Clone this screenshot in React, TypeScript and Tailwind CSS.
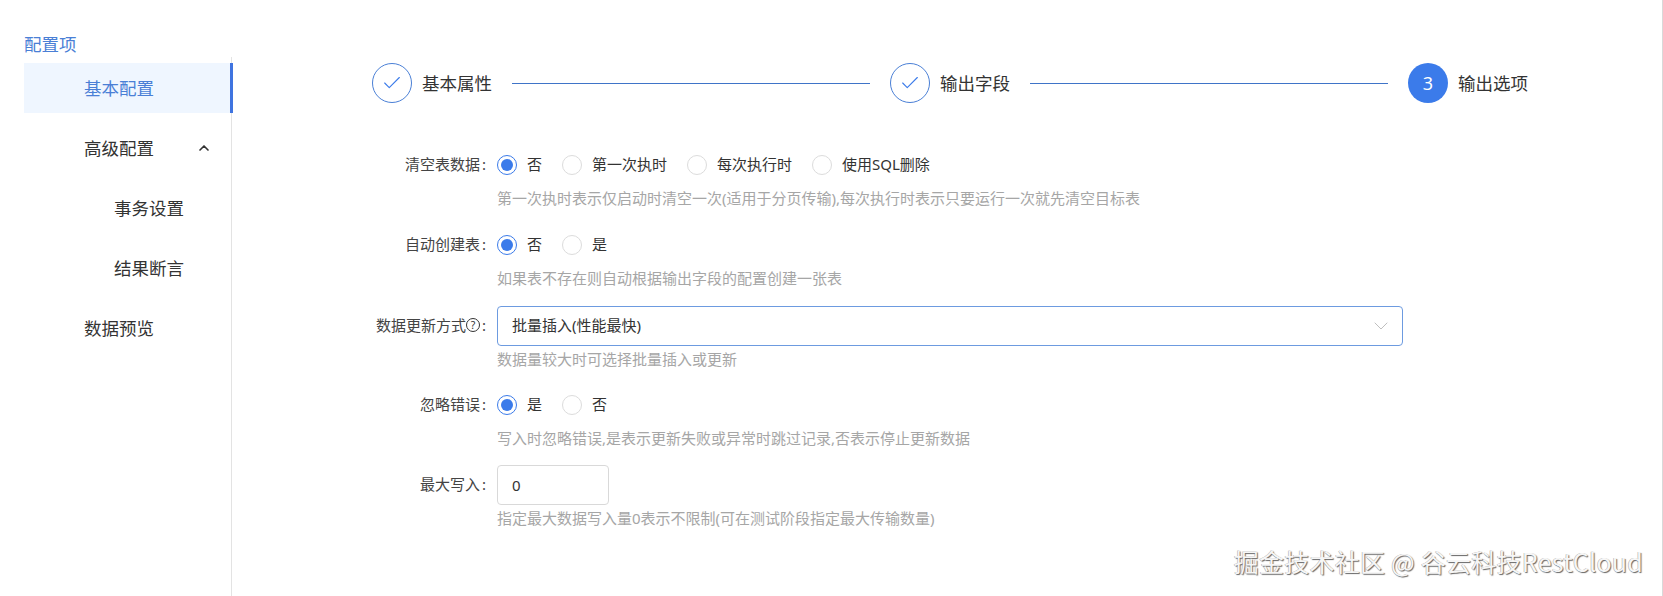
import { Check, ChevronDown, ChevronUp } from 'lucide-react';
import type { ReactNode } from 'react';

const FONT = "font-['Noto_Sans','Noto_Sans_CJK_SC',sans-serif]";

function Step({ label, num }: { label: string; num?: number }) {
  return (
    <div className="flex items-center gap-[10px] shrink-0">
      {num ? (
        <div className="w-10 h-10 rounded-full bg-[#3b7bea] text-white text-[18px] flex items-center justify-center">
          {num}
        </div>
      ) : (
        <div className="w-10 h-10 rounded-full border border-[#4a7fd6] text-[#3b7bea] flex items-center justify-center">
          <Check className="w-[22px] h-[22px]" strokeWidth={1.2} />
        </div>
      )}
      <span className="text-[17.5px] text-[#333]">{label}</span>
    </div>
  );
}

function Radio({ label, checked }: { label: string; checked?: boolean }) {
  return (
    <div className="flex items-center gap-[10px] mr-[20px]">
      {checked ? (
        <span className="w-5 h-5 rounded-full border border-[#3b7bea] flex items-center justify-center">
          <span className="w-3 h-3 rounded-full bg-[#3b7bea]" />
        </span>
      ) : (
        <span className="w-5 h-5 rounded-full border border-[#dcdcdc]" />
      )}
      <span className="text-[15px] text-[#333] pb-[2px]">{label}</span>
    </div>
  );
}

function Row({ label, help, children }: { label: ReactNode; help: string; children: ReactNode }) {
  return (
    <div className="flex h-20">
      <div className="w-[139px] h-10 pb-[2px] flex items-center justify-end gap-[2px] pr-[11px] text-[15px] text-[#444]">
        {label}
        <span>:</span>
      </div>
      <div className="flex-1">
        <div className="h-10 flex items-center">{children}</div>
        <div className="mt-[1px] text-[15px] leading-6 text-[#a6a6a6] whitespace-nowrap">{help}</div>
      </div>
    </div>
  );
}

export default function App() {
  return (
    <div className={`${FONT} relative w-[1663px] h-[596px] bg-white overflow-hidden flex border-r border-[#d9d9d9]`}>
      {/* Sidebar */}
      <aside className="w-[233px] shrink-0 pl-6 pt-[32px] flex flex-col">
        <div className="text-[17.5px] leading-[25px] text-[#4a7fd6]">配置项</div>
        <div className="flex-1 border-r border-[#e3e3e3] mr-[1px] text-[17.5px] text-[#333]">
          <div className="h-[6px]" />
          <div className="h-[50px] -mr-[2px] pl-[60px] flex items-center bg-[#eff6ff] border-r-[3px] border-[#3f74e0] text-[#4a7fd6]">
            基本配置
          </div>
          <div className="h-[50px] mt-[10px] pl-[60px] pr-[19px] flex items-center justify-between">
            高级配置
            <ChevronUp className="w-4 h-4 text-[#333]" strokeWidth={2.5} />
          </div>
          <div className="h-[50px] mt-[10px] pl-[90px] flex items-center">事务设置</div>
          <div className="h-[50px] mt-[10px] pl-[90px] flex items-center">结果断言</div>
          <div className="h-[50px] mt-[10px] pl-[60px] flex items-center">数据预览</div>
        </div>
      </aside>

      {/* Main */}
      <main className="flex-1 pt-[63px]">
        <div className="w-[1156px] ml-[139px] flex items-center">
          <Step label="基本属性" />
          <div className="w-[358px] h-px bg-[#3f74c8] ml-5 mr-5" />
          <Step label="输出字段" />
          <div className="w-[358px] h-px bg-[#3f74c8] ml-5 mr-5" />
          <Step label="输出选项" num={3} />
        </div>

        <div className="mt-[42px] ml-[125px]">
          <Row label="清空表数据" help="第一次执时表示仅启动时清空一次(适用于分页传输),每次执行时表示只要运行一次就先清空目标表">
            <Radio label="否" checked />
            <Radio label="第一次执时" />
            <Radio label="每次执行时" />
            <Radio label="使用SQL删除" />
          </Row>
          <Row label="自动创建表" help="如果表不存在则自动根据输出字段的配置创建一张表">
            <Radio label="否" checked />
            <Radio label="是" />
          </Row>
          <div className="h-px" />
          <Row
            label={
              <span className="flex items-center">
                数据更新方式
                <span className="w-[14px] h-[14px] rounded-full border border-[#333] text-[10.5px] leading-none text-[#333] flex items-center justify-center">
                  ?
                </span>
              </span>
            }
            help="数据量较大时可选择批量插入或更新"
          >
            <div className="w-[906px] h-10 rounded-[4px] border border-[#6d9be0] pl-[14px] pr-[9px] flex items-center justify-between text-[15px] text-[#333]">
              <span className="pb-[2px]">批量插入(性能最快)</span>
              <ChevronDown className="w-6 h-6 text-[#bfbfbf]" strokeWidth={1} />
            </div>
          </Row>
          <div className="-mt-px" />
          <Row label="忽略错误" help="写入时忽略错误,是表示更新失败或异常时跳过记录,否表示停止更新数据">
            <Radio label="是" checked />
            <Radio label="否" />
          </Row>
          <Row label="最大写入" help="指定最大数据写入量0表示不限制(可在测试阶段指定最大传输数量)">
            <div className="w-[112px] h-10 rounded-[4px] border border-[#d9d9d9] pl-[14px] flex items-center text-[15px] text-[#333]">
              0
            </div>
          </Row>
        </div>
      </main>

      {/* Watermark */}
      <div className="absolute right-[19px] top-[546px] font-['Noto_Sans_CJK_SC',sans-serif] text-[25px] tracking-[0.25px] leading-[30px] whitespace-nowrap text-[#f6f6f6] [text-shadow:1px_1px_1px_#666,-0.5px_0_0_#aaa]">
        掘金技术社区 @ 谷云科技RestCloud
      </div>
    </div>
  );
}
